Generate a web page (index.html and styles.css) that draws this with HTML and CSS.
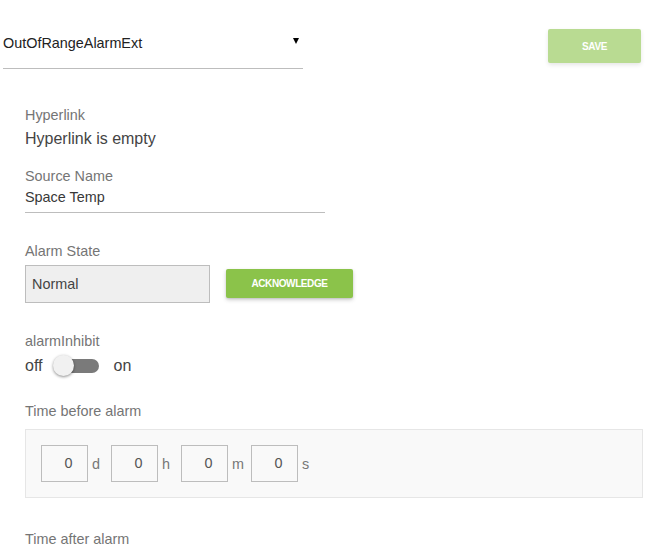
FILE: index.html
```html
<!DOCTYPE html>
<html>
<head>
<meta charset="utf-8">
<link rel="stylesheet" href="styles.css">
</head>
<body>
<div class="page">
  <div class="header">
    <div class="select">
      <span class="select-text">OutOfRangeAlarmExt</span>
      <span class="select-arrow"></span>
    </div>
    <button class="btn btn-save">SAVE</button>
  </div>

  <div class="form">
    <div class="label label-first">Hyperlink</div>
    <div class="value-large">Hyperlink is empty</div>

    <div class="label label-source">Source Name</div>
    <div class="value-line">Space Temp</div>

    <div class="label label-section">Alarm State</div>
    <div class="state-row">
      <div class="state-box">Normal</div>
      <button class="btn btn-ack">ACKNOWLEDGE</button>
    </div>

    <div class="label label-section">alarmInhibit</div>
    <div class="toggle-row">
      <span class="toggle-text">off</span>
      <span class="toggle">
        <span class="toggle-track"></span>
        <span class="toggle-knob"></span>
      </span>
      <span class="toggle-text toggle-on">on</span>
    </div>

    <div class="label label-time">Time before alarm</div>
    <div class="time-box">
      <div class="time-input">0</div><span class="unit">d</span>
      <div class="time-input">0</div><span class="unit">h</span>
      <div class="time-input">0</div><span class="unit">m</span>
      <div class="time-input">0</div><span class="unit">s</span>
    </div>

    <div class="label label-after">Time after alarm</div>
  </div>
</div>
</body>
</html>
```

FILE: styles.css
```css
html, body {
  margin: 0;
  padding: 0;
  background: #ffffff;
  font-family: "Liberation Sans", Arial, sans-serif;
  overflow: hidden;
}

.page {
  width: 649px;
  height: 546px;
}

.header {
  display: flex;
  justify-content: space-between;
  align-items: flex-start;
  padding: 29px 8px 0 3px;
}

.select {
  width: 300px;
  height: 39px;
  border-bottom: 1px solid #bdbdbd;
  display: flex;
  align-items: flex-start;
}

.select-text {
  font-size: 14.4px;
  line-height: 18px;
  color: #222222;
  padding-top: 5px;
}

.select-arrow {
  margin-left: auto;
  margin-right: 4px;
  margin-top: 9px;
  width: 0;
  height: 0;
  border-left: 3.5px solid transparent;
  border-right: 3.5px solid transparent;
  border-top: 6px solid #000;
}

.btn {
  border: none;
  border-radius: 2px;
  color: #ffffff;
  font-family: "Liberation Sans", Arial, sans-serif;
  font-size: 10px;
  font-weight: bold;
  letter-spacing: -0.4px;
  padding: 0;
  box-shadow: 0 2px 4px rgba(0,0,0,0.18), 0 1px 2px rgba(0,0,0,0.1);
}

.btn-save {
  width: 93px;
  height: 34px;
  background: #b9db92;
  box-shadow: 0 2px 4px rgba(0,0,0,0.10);
}

.form {
  padding-left: 25px;
}

.label {
  font-size: 14.4px;
  line-height: 16px;
  color: #757575;
}

.label-first {
  margin-top: 38px;
}

.value-large {
  margin-top: 6px;
  font-size: 16px;
  line-height: 20px;
  color: #444444;
}

.label-source {
  margin-top: 19px;
}

.value-line {
  margin-top: 5px;
  width: 300px;
  font-size: 14.4px;
  line-height: 16px;
  color: #383838;
  padding-bottom: 7px;
  border-bottom: 1px solid #bdbdbd;
}

.label-section {
  margin-top: 30px;
}

.state-row {
  margin-top: 6px;
  display: flex;
  align-items: center;
  gap: 16px;
}

.state-box {
  box-sizing: border-box;
  width: 185px;
  height: 38px;
  background: #efefef;
  border: 1px solid #bdbdbd;
  font-size: 14.4px;
  line-height: 36px;
  color: #444;
  padding-left: 6px;
}

.btn-ack {
  width: 127px;
  height: 29px;
  margin-top: -2px;
  background: #8bc34a;
  font-size: 10px;
}

.toggle-row {
  margin-top: 3px;
  height: 28px;
  display: flex;
  align-items: center;
}

.toggle-text {
  font-size: 16px;
  color: #444444;
}

.toggle {
  position: relative;
  width: 46px;
  height: 22px;
  margin-left: 10px;
}

.toggle-track {
  position: absolute;
  left: 3px;
  right: 0;
  top: 4px;
  height: 14px;
  border-radius: 7px;
  background: #7a7a7a;
}

.toggle-knob {
  position: absolute;
  left: 0;
  top: 0;
  width: 21px;
  height: 21px;
  border-radius: 50%;
  background: #f1f1f1;
  box-shadow: 0 1px 3px rgba(0,0,0,0.45);
}

.toggle-on {
  margin-left: 15px;
}

.label-time {
  margin-top: 23px;
}

.time-box {
  margin-top: 10px;
  width: 618px;
  box-sizing: border-box;
  background: #f9f9f9;
  border: 1px solid #e6e6e6;
  padding: 15px;
  display: flex;
  align-items: center;
}

.time-input {
  box-sizing: border-box;
  width: 47px;
  height: 37px;
  border: 1px solid #bdbdbd;
  background: #f9f9f9;
  font-size: 14.4px;
  line-height: 35px;
  color: #555;
  text-align: center;
  padding-left: 8px;
}

.unit {
  width: 23px;
  box-sizing: border-box;
  padding-left: 4px;
  font-size: 14.4px;
  color: #777;
}

.label-after {
  margin-top: 33px;
}
```
